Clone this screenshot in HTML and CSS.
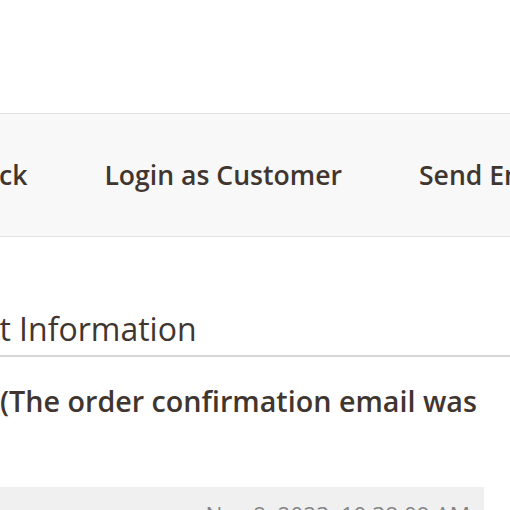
FILE: index.html
```html
<!DOCTYPE html>
<html lang="en">
<head>
<meta charset="utf-8">
<title>Order View</title>
<link rel="stylesheet" href="styles.css">
</head>
<body>
<div class="page">
  <div class="toolbar">
    <span class="btn btn-back">Back</span>
    <span class="btn">Login as Customer</span>
    <span class="btn">Send Email</span>
  </div>
  <section class="section">
    <h2 class="section-title">Account Information</h2>
    <div class="note-wrap">
      <p class="order-note">(The order confirmation email was not sent)</p>
    </div>
    <div class="info-box">
      <span class="date">Nov 8, 2023, 10:38:09 AM</span>
    </div>
  </section>
</div>
</body>
</html>
```
FILE: styles.css
```css
html, body {
  margin: 0;
  padding: 0;
  background: #ffffff;
  overflow: hidden;
}
body {
  width: 510px;
  height: 510px;
  font-family: "Open Sans", "Noto Sans", sans-serif;
  color: #41362f;
}
.page {
  padding-top: 113px;
}
.toolbar {
  display: flex;
  align-items: center;
  height: 122px;
  background: #f8f8f8;
  border-top: 1px solid #e3e3e3;
  border-bottom: 1px solid #e3e3e3;
  white-space: nowrap;
  gap: 77px;
  margin-left: -34px;
  width: 720px;
}
.btn {
  font-size: 26.6px;
  font-weight: 600;
  line-height: 1;
}
.section {
  padding-top: 73px;
}
.section-title {
  margin: 0;
  font-size: 32px;
  font-weight: 400;
  line-height: 1.2;
  padding-bottom: 7px;
  border-bottom: 2px solid #d6d6d6;
  margin-left: -110px;
  white-space: nowrap;
}
.note-wrap {
  width: 484px;
  overflow: hidden;
}
.order-note {
  margin: 24px 0 0;
  font-size: 28.7px;
  font-weight: 600;
  line-height: 1.4;
  white-space: nowrap;
}
.info-box {
  margin-top: 65px;
  width: 484px;
  height: 60px;
  background: #f0f0f0;
  display: flex;
  justify-content: flex-end;
  padding-top: 17px;
  box-sizing: border-box;
  padding-right: 14px;
}
.date {
  font-size: 22.5px;
  color: #858585;
  line-height: 1;
}
```
